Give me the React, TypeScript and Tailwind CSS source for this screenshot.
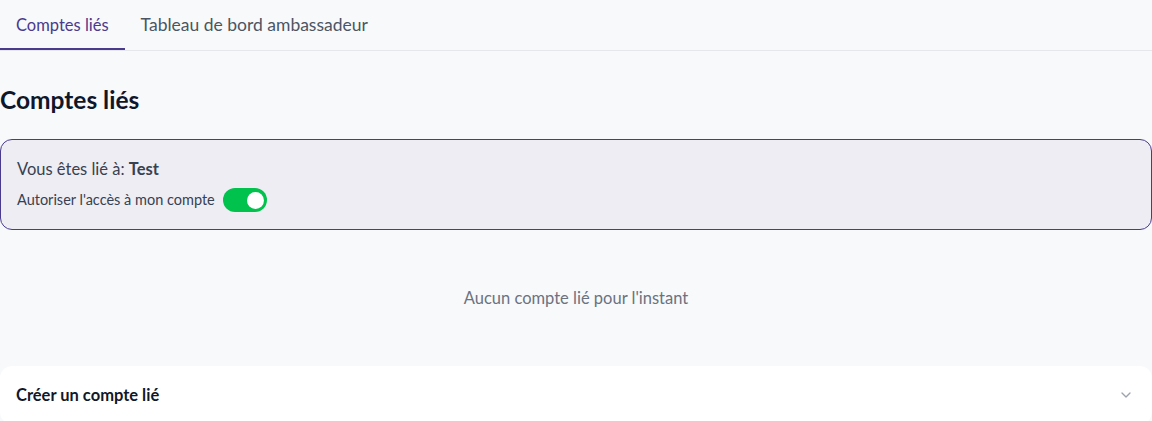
import React, { useState } from 'react';
import { ChevronDown } from 'lucide-react';

const App = () => {
  const [allowAccess, setAllowAccess] = useState(true);
  const [activeTab, setActiveTab] = useState('linked');

  return (
    <div className="min-h-screen bg-[#f8f9fb] font-['Lato',sans-serif] text-[#111827]">
      {/* Tabs */}
      <div className="flex border-b border-[#e5e7eb]">
        <button
          onClick={() => setActiveTab('linked')}
          className={`h-[50px] px-4 pt-[3px] text-[16.5px] border-b-2 ${
            activeTab === 'linked' ? 'border-[#4a3b8c] text-[#4a3b8c]' : 'border-transparent text-[#4b5563]'
          }`}
        >
          Comptes liés
        </button>
        <button
          onClick={() => setActiveTab('ambassador')}
          className={`h-[50px] px-4 pt-[3px] text-[17.5px] border-b-2 ${
            activeTab === 'ambassador' ? 'border-[#4a3b8c] text-[#4a3b8c]' : 'border-transparent text-[#4b5563]'
          }`}
        >
          Tableau de bord ambassadeur
        </button>
      </div>

      <h1 className="mt-[33px] text-[24.5px] font-bold leading-[32px] text-[#0f172a]">Comptes liés</h1>

      {/* Linked to */}
      <div className="mt-[23px] rounded-xl border border-[#4a3b8c] bg-[#eeedf3] px-4 pt-[17px] pb-[17px]">
        <p className="text-[16.5px] leading-[24px] text-[#374151]">
          Vous êtes lié à: <span className="font-bold">Test</span>
        </p>
        <div className="mt-[7px] flex items-center gap-2">
          <span className="text-[14.5px] text-[#374151]">Autoriser l'accès à mon compte</span>
          <button
            onClick={() => setAllowAccess(!allowAccess)}
            className={`flex h-6 w-11 items-center rounded-full px-[3px] ${
              allowAccess ? 'justify-end bg-[#00c24d]' : 'justify-start bg-[#d1d5db]'
            }`}
          >
            <span className="h-[17px] w-[17px] rounded-full bg-white" />
          </button>
        </div>
      </div>

      <div className="flex h-[136px] items-center justify-center text-[16.5px] text-[#6b7280]">
        Aucun compte lié pour l'instant
      </div>

      {/* Create linked account */}
      <div className="flex h-[58px] items-center justify-between rounded-xl bg-white pl-4 pr-[18px]">
        <span className="text-[16.5px] font-bold text-[#111827]">Créer un compte lié</span>
        <ChevronDown className="h-4 w-4 text-[#9ca3af]" />
      </div>
    </div>
  );
};

export default App;
